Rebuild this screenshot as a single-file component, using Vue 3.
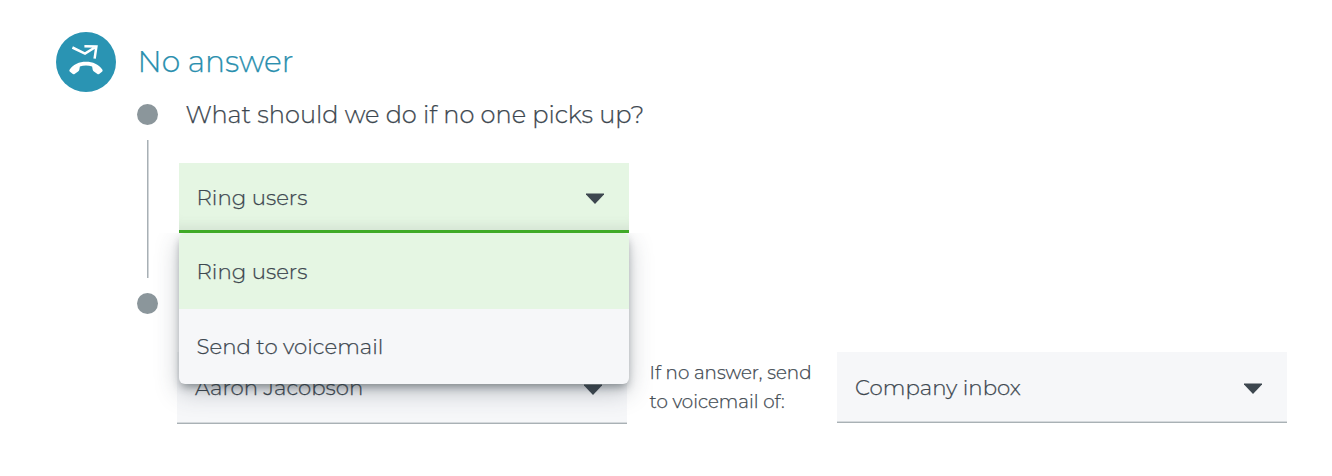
<template>
  <div class="flow">
    <header class="header">
      <svg class="badge" viewBox="0 0 60 60">
        <circle cx="30" cy="30" r="30" fill="#2a94b3" />
        <path
          d="M16.4 15.5L29 21.6L39.6 15M28.4 14.3L40.4 14.5L38.6 26.6"
          fill="none"
          stroke="#fff"
          stroke-width="2.5"
        />
        <path
          d="M13.9 37.2C17.5 32.4 23 29.8 30 29.8C37 29.8 42.5 32.4 46.1 37.2C46.9 38.3 46.8 38.9 46 39.7L43.8 41.6C43 42.4 42 42.4 41.1 41.7L37.9 39.6C37.2 39.1 36.9 38.6 36.7 37.8L36.1 34.4C32.4 33.2 27.6 33.2 23.9 34.4L23.3 37.8C23.1 38.6 22.8 39.1 22.1 39.6L18.9 41.7C18 42.4 17 42.4 16.2 41.6L14 39.7C13.2 38.9 13.1 38.3 13.9 37.2Z"
          fill="#fff"
        />
      </svg>
      <h1 class="title">No answer</h1>
    </header>

    <div class="body">
      <div class="timeline">
        <span class="dot"></span>
        <span class="line"></span>
        <span class="dot"></span>
      </div>

      <div class="steps">
        <p class="question">What should we do if no one picks up?</p>

        <div class="dropdown">
          <button class="select active" @click="open = !open">
            <span>{{ action }}</span>
            <svg class="caret" viewBox="0 0 18 11">
              <path d="M0 0.5H18V1.5L9 11L0 1.5Z" />
            </svg>
          </button>
          <ul v-if="open" class="menu">
            <li
              v-for="option in options"
              :key="option"
              :class="{ selected: option === action }"
              @click="choose(option)"
            >
              {{ option }}
            </li>
          </ul>
        </div>

        <div class="row">
          <button class="select user">
            <span>Aaron Jacobson</span>
            <svg class="caret" viewBox="0 0 18 11">
              <path d="M0 0.5H18V1.5L9 11L0 1.5Z" />
            </svg>
          </button>
          <p class="note">
            If no answer, send<br />
            to voicemail of:
          </p>
          <button class="select">
            <span>Company inbox</span>
            <svg class="caret" viewBox="0 0 18 11">
              <path d="M0 0.5H18V1.5L9 11L0 1.5Z" />
            </svg>
          </button>
        </div>
      </div>
    </div>
  </div>
</template>

<script setup>
import { ref } from "vue";

const options = ["Ring users", "Send to voicemail"];

const open = ref(true);
const action = ref("Ring users");

function choose(option) {
  action.value = option;
  open.value = false;
}
</script>

<style>
body {
  background: #fff;
}
</style>

<style scoped>
.flow {
  box-sizing: border-box;
  width: 1332px;
  height: 476px;
  padding: 32px 45px 0 56px;
  overflow: hidden;
  color: #3d474f;
  font-family: Montserrat, Inter, sans-serif;
  font-weight: 300;
  -webkit-text-stroke: 0.25px currentColor;
}

.header {
  display: flex;
  align-items: center;
  gap: 22px;
  height: 60px;
}

.badge {
  width: 60px;
  height: 60px;
}

.title {
  margin: 0 0 2px -0.5px;
  color: #2a8fae;
  font-size: 29.7px;
  font-weight: 300;
  white-space: nowrap;
}

.body {
  display: flex;
  padding-left: 81px;
}

.timeline {
  display: flex;
  flex-direction: column;
  align-items: center;
  width: 21px;
  padding-top: 12px;
}

.dot {
  width: 21px;
  height: 21px;
  border-radius: 50%;
  background: #8b969b;
}

.line {
  box-sizing: border-box;
  width: 2px;
  height: 138px;
  margin: 15px 0;
  border-left: 1px solid #a8b0b5;
  background: #d2d6d9;
}

.steps {
  padding-left: 19px;
}

.question {
  height: 44px;
  margin: 0 0 27px 8.5px;
  font-size: 24.05px;
  line-height: 46px;
  white-space: nowrap;
}

.dropdown {
  position: relative;
  width: 450px;
  margin-left: 2px;
}

.select {
  display: flex;
  align-items: center;
  justify-content: space-between;
  box-sizing: border-box;
  width: 450px;
  height: 71px;
  padding: 0 25.5px 0 18px;
  border: none;
  border-bottom: 1px solid #a9b1b5;
  box-shadow: inset 0 -1px #d5d9dc;
  background: #f6f7f9;
  color: inherit;
  font: inherit;
  font-size: 21.3px;
  white-space: nowrap;
}

.select.active {
  height: 70px;
  padding: 1px 25.5px 0 17.5px;
  border-bottom: 3px solid #3faa27;
  box-shadow: inset 0 -14px 12px -10px rgba(80, 90, 90, 0.12);
  background: #e5f6e3;
}

.caret {
  width: 18px;
  height: 11px;
  margin-top: 3px;
  fill: #3d474f;
}

.menu {
  position: absolute;
  top: 70px;
  left: 0;
  z-index: 1;
  width: 450px;
  margin: 0;
  padding: 0;
  border-radius: 6px;
  overflow: hidden;
  background: #f6f7f9;
  list-style: none;
  box-shadow: 0 5px 8px -2px rgba(40, 50, 55, 0.45),
    0 8px 24px rgba(50, 60, 75, 0.28);
  clip-path: inset(0 -40px -50px -40px);
}

.menu li {
  height: 75px;
  padding-left: 17.5px;
  font-size: 21.3px;
  line-height: 74px;
}

.menu li:first-child {
  height: 76px;
  line-height: 76px;
}

.menu .selected {
  background: #e5f6e3;
}

.row {
  display: flex;
  align-items: flex-start;
  margin-top: 119px;
}

.user {
  height: 72px;
}

.user span {
  margin-top: -1px;
}

.note {
  width: 187.5px;
  margin: 6px 0 0 22.5px;
  font-size: 18.3px;
  line-height: 29px;
  white-space: nowrap;
}
</style>
